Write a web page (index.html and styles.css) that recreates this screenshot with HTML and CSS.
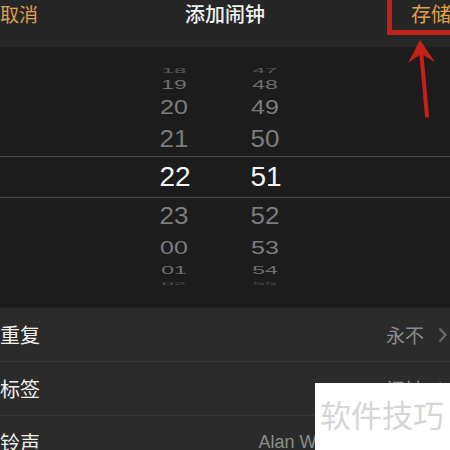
FILE: index.html
```html
<!DOCTYPE html>
<html lang="zh-CN">
<head>
    <meta charset="UTF-8">
    <meta name="viewport" content="width=device-width, initial-scale=1.0">
    <title>添加闹钟</title>
    <link rel="stylesheet" href="styles.css">
</head>
<body>
    <div class="screen">
        <div class="top-bar">
            <span class="nav-btn left">取消</span>
            <span class="nav-title">添加闹钟</span>
            <span class="nav-btn right">存储</span>
        </div>

        <div class="picker">
            <div class="prow far2"><span class="cell">18</span><span class="cell">47</span></div>
            <div class="prow far1"><span class="cell">19</span><span class="cell">48</span></div>
            <div class="prow near2"><span class="cell">20</span><span class="cell">49</span></div>
            <div class="prow near1"><span class="cell">21</span><span class="cell">50</span></div>
            <div class="prow selected"><span class="cell">22</span><span class="cell">51</span></div>
            <div class="prow below1"><span class="cell">23</span><span class="cell">52</span></div>
            <div class="prow below2"><span class="cell">00</span><span class="cell">53</span></div>
            <div class="prow below3"><span class="cell">01</span><span class="cell">54</span></div>
            <div class="prow below4"><span class="cell">02</span><span class="cell">55</span></div>
        </div>

        <div class="settings">
            <div class="row">
                <span class="label">重复</span>
                <span class="value">永不</span>
                <svg class="chev" width="9" height="16" viewBox="0 0 9 16"><polyline points="1.5,1.5 7.5,8 1.5,14.5" fill="none" stroke="#6c6c6c" stroke-width="2"/></svg>
            </div>
            <div class="row">
                <span class="label">标签</span>
                <span class="value">闹钟</span>
                <svg class="chev" width="9" height="16" viewBox="0 0 9 16"><polyline points="1.5,1.5 7.5,8 1.5,14.5" fill="none" stroke="#6c6c6c" stroke-width="2"/></svg>
            </div>
            <div class="row">
                <span class="label">铃声</span>
                <span class="value latin">Alan Walker - Faded</span>
                <svg class="chev" width="9" height="16" viewBox="0 0 9 16"><polyline points="1.5,1.5 7.5,8 1.5,14.5" fill="none" stroke="#6c6c6c" stroke-width="2"/></svg>
            </div>
        </div>

        <!-- 标注 -->
        <div class="mark-box"></div>
        <svg class="mark-arrow" width="450" height="130" viewBox="0 0 450 130">
            <line x1="421" y1="50" x2="427" y2="116" stroke="#c42118" stroke-width="4" stroke-linecap="round"/>
            <polygon points="420,40 435,62 421,54 408,63" fill="#c42118"/>
        </svg>

        <div class="watermark">软件技巧</div>
    </div>
</body>
</html>
```

FILE: styles.css
```css
body {
    margin: 0;
    background: #1c1c1c;
    font-family: "Noto Sans CJK SC", "Liberation Sans", sans-serif;
}
.screen {
    position: relative;
    width: 450px;
    height: 450px;
    overflow: hidden;
    display: flex;
    flex-direction: column;
}
.top-bar {
    height: 47px;
    flex-shrink: 0;
    background: #262626;
    display: grid;
    grid-template-columns: 1fr auto 1fr;
    align-items: start;
    padding-top: 2px;
    box-sizing: border-box;
    font-size: 19px;
    line-height: 24px;
}
.nav-btn {
    color: #e0a04c;
}
.nav-btn.right {
    text-align: right;
    margin-right: -1px;
    font-size: 20px;
}
.nav-title {
    color: #f2f2f2;
    font-weight: 500;
    font-size: 20px;
}
.picker {
    height: 260px;
    flex-shrink: 0;
    background: #1c1c1c;
    padding-top: 19px;
    box-sizing: border-box;
    font-family: "Liberation Sans", Arial, sans-serif;
}
.prow {
    display: flex;
    align-items: center;
    padding-left: 144px;
    gap: 31px;
    color: #7c7c7c;
    font-size: 25px;
    overflow: hidden;
}
.cell {
    width: 60px;
    text-align: center;
    display: inline-block;
}
.far2 { height: 10px; color: #5a5a5a; }
.far2 .cell { transform: scaleY(0.35); font-size: 22px; }
.far1 { height: 16px; color: #6e6e6e; }
.far1 .cell { transform: scaleY(0.55); font-size: 23px; }
.near2 { height: 30px; }
.near2 .cell { transform: scaleY(0.78); }
.near1 { height: 34px; }
.near1 .cell { transform: scaleY(0.92); font-size: 26px; }
.selected {
    height: 42px;
    box-sizing: border-box;
    border-top: 1px solid #4a4a4a;
    border-bottom: 1px solid #4a4a4a;
    color: #f4f4f4;
    font-size: 28px;
    padding-left: 145px;
}
.below1 { height: 36px; }
.below1 .cell { transform: scaleY(0.92); font-size: 26px; }
.below2 { height: 26px; }
.below2 .cell { transform: scaleY(0.72); }
.below3 { height: 20px; color: #6e6e6e; }
.below3 .cell { transform: scaleY(0.5); font-size: 23px; }
.below4 { height: 8px; color: #4e4e4e; }
.below4 .cell { transform: scaleY(0.2); font-size: 22px; }
.settings {
    flex: 1;
    background: #2b2b2b;
    border-top: 1px solid #222;
}
.row {
    height: 54px;
    box-sizing: border-box;
    display: flex;
    align-items: center;
    border-bottom: 1px solid #383838;
    padding-right: 3px;
}
.label {
    color: #f0f0f0;
    font-size: 20px;
    flex: 1;
}
.value {
    color: #8c8c8c;
    font-size: 19px;
    margin-right: 14px;
}
.value.latin {
    font-family: "Liberation Sans", Arial, sans-serif;
    font-size: 18px;
    margin-right: 16px;
}
.mark-box {
    position: absolute;
    left: 387px;
    top: -10px;
    width: 80px;
    height: 45px;
    border: 5px solid #c42118;
    box-sizing: border-box;
}
.mark-arrow {
    position: absolute;
    left: 0;
    top: 0;
}
.watermark {
    position: absolute;
    left: 315px;
    top: 383px;
    width: 135px;
    height: 67px;
    background: #fff;
    color: #d6d6d6;
    font-size: 31px;
    line-height: 62px;
    padding-left: 5px;
    box-sizing: border-box;
}
```
